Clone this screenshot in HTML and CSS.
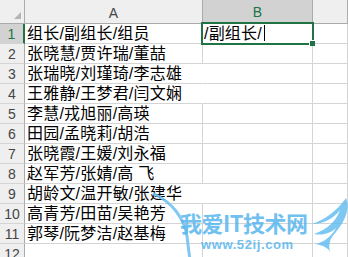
FILE: index.html
```html
<!DOCTYPE html>
<html lang="zh-CN">
<head>
    <meta charset="UTF-8">
    <title>组长/副组长/组员</title>
    <link rel="stylesheet" href="styles.css">
</head>
<body>
    <div class="sheet">
        <div class="grid">
            <!-- column headers -->
            <div class="corner"><span class="corner-mark"></span></div>
            <div class="colhead">A</div>
            <div class="colhead active">B</div>
            <div class="colhead"></div>

            <div class="rowhead active">1</div>
            <div class="cell">组长/副组长/组员</div>
            <div class="cell editing">/副组长/<span class="caret"></span></div>
            <div class="cell"></div>

            <div class="rowhead">2</div>
            <div class="cell">张晓慧/贾许瑞/董喆</div>
            <div class="cell"></div>
            <div class="cell"></div>

            <div class="rowhead">3</div>
            <div class="cell spill">张瑞晓/刘瑾琦/李志雄</div>
            <div class="cell"></div>
            <div class="cell"></div>

            <div class="rowhead">4</div>
            <div class="cell spill">王雅静/王梦君/闫文娴</div>
            <div class="cell"></div>
            <div class="cell"></div>

            <div class="rowhead">5</div>
            <div class="cell">李慧/戎旭丽/高瑛</div>
            <div class="cell"></div>
            <div class="cell"></div>

            <div class="rowhead">6</div>
            <div class="cell">田园/孟晓莉/胡浩</div>
            <div class="cell"></div>
            <div class="cell"></div>

            <div class="rowhead">7</div>
            <div class="cell">张晓霞/王媛/刘永福</div>
            <div class="cell"></div>
            <div class="cell"></div>

            <div class="rowhead">8</div>
            <div class="cell">赵军芳/张婧/高 飞</div>
            <div class="cell"></div>
            <div class="cell"></div>

            <div class="rowhead">9</div>
            <div class="cell spill">胡龄文/温开敏/张建华</div>
            <div class="cell"></div>
            <div class="cell"></div>

            <div class="rowhead">10</div>
            <div class="cell">高青芳/田苗/吴艳芳</div>
            <div class="cell"></div>
            <div class="cell"></div>

            <div class="rowhead">11</div>
            <div class="cell">郭琴/阮梦洁/赵基梅</div>
            <div class="cell"></div>
            <div class="cell"></div>

            <div class="rowhead">12</div>
            <div class="cell"></div>
            <div class="cell"></div>
            <div class="cell"></div>
        </div>

        <!-- active cell frame over B1 -->
        <div class="selection"><span class="fill-handle"></span></div>

        <!-- site watermark over the grid -->
        <div class="watermark">
            <svg class="wm-swoosh" width="60" height="70" viewBox="0 0 60 70">
                <path d="M2 2 C 20 10, 32 26, 35 44 C 36 54, 37 60, 38 68" fill="none" stroke="#6cc0f0" stroke-width="3" stroke-linecap="round" opacity="0.85"/>
            </svg>
            <svg class="wm-wing" width="44" height="56" viewBox="0 0 44 56">
                <path d="M40 2 C 30 16, 18 24, 6 28 C 18 28, 28 22, 34 14 C 30 26, 20 34, 8 38 C 18 40, 26 36, 30 32 C 26 40, 18 46, 10 48 C 18 50, 22 52, 24 56 C 22 48, 24 42, 30 36 C 40 24, 44 12, 40 2 Z" fill="#5cbaf0" opacity="0.8"/>
            </svg>
            <div class="wm-title">我爱IT技术网</div>
            <div class="wm-url">www.52ij.com</div>
        </div>
    </div>
</body>
</html>
```

FILE: styles.css
```css
body {
    margin: 0;
    width: 348px;
    height: 257px;
    overflow: hidden;
    background-color: #fff;
    font-family: "Liberation Sans", "Noto Sans CJK SC", sans-serif;
}

.sheet {
    position: relative;
    width: 348px;
    height: 257px;
    overflow: hidden;
}

.grid {
    display: grid;
    grid-template-columns: 25px 178px 110px 1fr;
    grid-template-rows: 24px repeat(12, 20px);
}

.grid > div {
    box-sizing: border-box;
    border-right: 1px solid #d4d4d4;
    border-bottom: 1px solid #d4d4d4;
}

/* headers */
.corner {
    position: relative;
    background-color: #efefef;
    border-bottom-color: #ababab !important;
    border-right-color: #ababab !important;
}

.corner-mark {
    position: absolute;
    right: 3px;
    bottom: 4px;
    width: 0;
    height: 0;
    border-left: 7px solid transparent;
    border-bottom: 7px solid #b4b4b4;
}

.colhead {
    display: flex;
    align-items: center;
    justify-content: center;
    background-color: #efefef;
    color: #444;
    font-family: "Liberation Sans", sans-serif;
    font-size: 14px;
    padding-top: 2px;
    border-right-color: #ababab !important;
    border-bottom-color: #ababab !important;
}

.colhead.active {
    background-color: #d2d2d2;
    color: #217346;
    border-bottom: 2px solid #217346 !important;
}

.rowhead {
    display: flex;
    align-items: center;
    justify-content: center;
    background-color: #efefef;
    color: #444;
    font-family: "Liberation Sans", sans-serif;
    font-size: 14px;
    padding-top: 1px;
    border-right-color: #ababab !important;
}

.rowhead.active {
    background-color: #d2d2d2;
    color: #217346;
    border-right: 2px solid #217346 !important;
}

/* cells */
.cell {
    padding-left: 2px;
    font-size: 16px;
    line-height: 19px;
    letter-spacing: 0.2px;
    color: #000;
    white-space: nowrap;
    overflow: visible;
    position: relative;
    z-index: 1;
}

.cell.spill {
    border-right-color: transparent !important;
}

.cell.editing {
    padding-left: 1px;
}

.caret {
    display: inline-block;
    width: 1px;
    height: 16px;
    margin-left: 2px;
    vertical-align: -2px;
    background-color: #000;
}

.selection {
    position: absolute;
    left: 201px;
    top: 22px;
    width: 113px;
    height: 23px;
    box-sizing: border-box;
    border: 2px solid #217346;
    z-index: 2;
}

.fill-handle {
    position: absolute;
    right: -3px;
    bottom: -3px;
    width: 5px;
    height: 5px;
    background-color: #217346;
    border-left: 1px solid #fff;
    border-top: 1px solid #fff;
}

/* watermark */
.watermark {
    position: absolute;
    left: 140px;
    top: 190px;
    width: 208px;
    height: 67px;
    z-index: 3;
    pointer-events: none;
}

.wm-swoosh {
    position: absolute;
    left: 12px;
    top: 2px;
}

.wm-wing {
    position: absolute;
    left: 166px;
    top: 6px;
}

.wm-title {
    position: absolute;
    left: 40px;
    top: 21px;
    font-family: "Noto Sans CJK SC", sans-serif;
    font-weight: bold;
    font-size: 22px;
    line-height: 22px;
    letter-spacing: -0.5px;
    color: #58b6ee;
    opacity: 0.85;
}

.wm-url {
    position: absolute;
    left: 61px;
    top: 48px;
    font-family: "Liberation Sans", sans-serif;
    font-weight: bold;
    font-size: 13px;
    line-height: 13px;
    letter-spacing: 0.6px;
    color: #58b6ee;
    opacity: 0.85;
}
```
